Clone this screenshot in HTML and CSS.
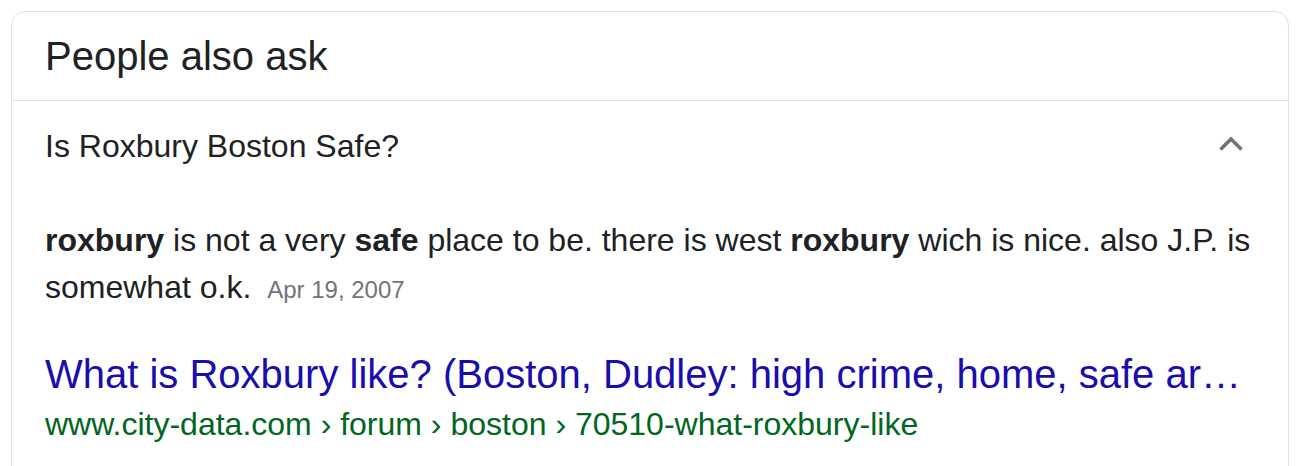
FILE: index.html
```html
<!DOCTYPE html>
<html>
<head>
<meta charset="utf-8">
<link rel="stylesheet" href="styles.css">
</head>
<body>
<div class="card">
  <div class="header">People also ask</div>
  <div class="question">
    <span>Is Roxbury Boston Safe?</span>
    <svg class="chev" width="26" height="16" viewBox="0 0 26 16"><polyline points="2.5,13.5 13,3 23.5,13.5" fill="none" stroke="#70757a" stroke-width="3.6"/></svg>
  </div>
  <div class="answer">
    <b>roxbury</b> is not a very <b>safe</b> place to be. there is west <b>roxbury</b> wich is nice. also J.P. is somewhat o.k. <span class="date">Apr 19, 2007</span>
  </div>
  <div class="result">
    <a class="title" href="#">What is Roxbury like? (Boston, Dudley: high crime, home, safe ar…</a>
    <div class="url">www.city-data.com › forum › boston › 70510-what-roxbury-like</div>
  </div>
</div>
</body>
</html>
```
FILE: styles.css
```css
html, body {
  margin: 0;
  padding: 0;
  background: #fff;
  overflow: hidden;
}
body {
  font-family: "Liberation Sans", Arial, sans-serif;
  color: #202124;
}
.card {
  margin: 11px 0 0 11px;
  width: 1276px;
  height: 470px;
  border: 1px solid #dfe1e5;
  border-radius: 14px;
}
.header {
  height: 88px;
  display: flex;
  align-items: center;
  padding-left: 33px;
  font-size: 40px;
  border-bottom: 1px solid #dfe1e5;
}
.question {
  height: 90px;
  display: flex;
  align-items: center;
  justify-content: space-between;
  padding: 0 44px 0 33px;
  font-size: 32px;
}
.chev {
  display: block;
  margin-top: -4px;
}
.answer {
  padding: 26px 34px 0 33px;
  font-size: 32px;
  line-height: 47px;
}
.date {
  font-size: 24px;
  color: #70757a;
  margin-left: 7px;
}
.result {
  padding: 35px 34px 0 33px;
}
.title {
  display: block;
  font-size: 40px;
  line-height: 52px;
  color: #1a0dab;
  text-decoration: none;
  white-space: nowrap;
}
.url {
  font-size: 32px;
  line-height: 48px;
  color: #006621;
}
```
